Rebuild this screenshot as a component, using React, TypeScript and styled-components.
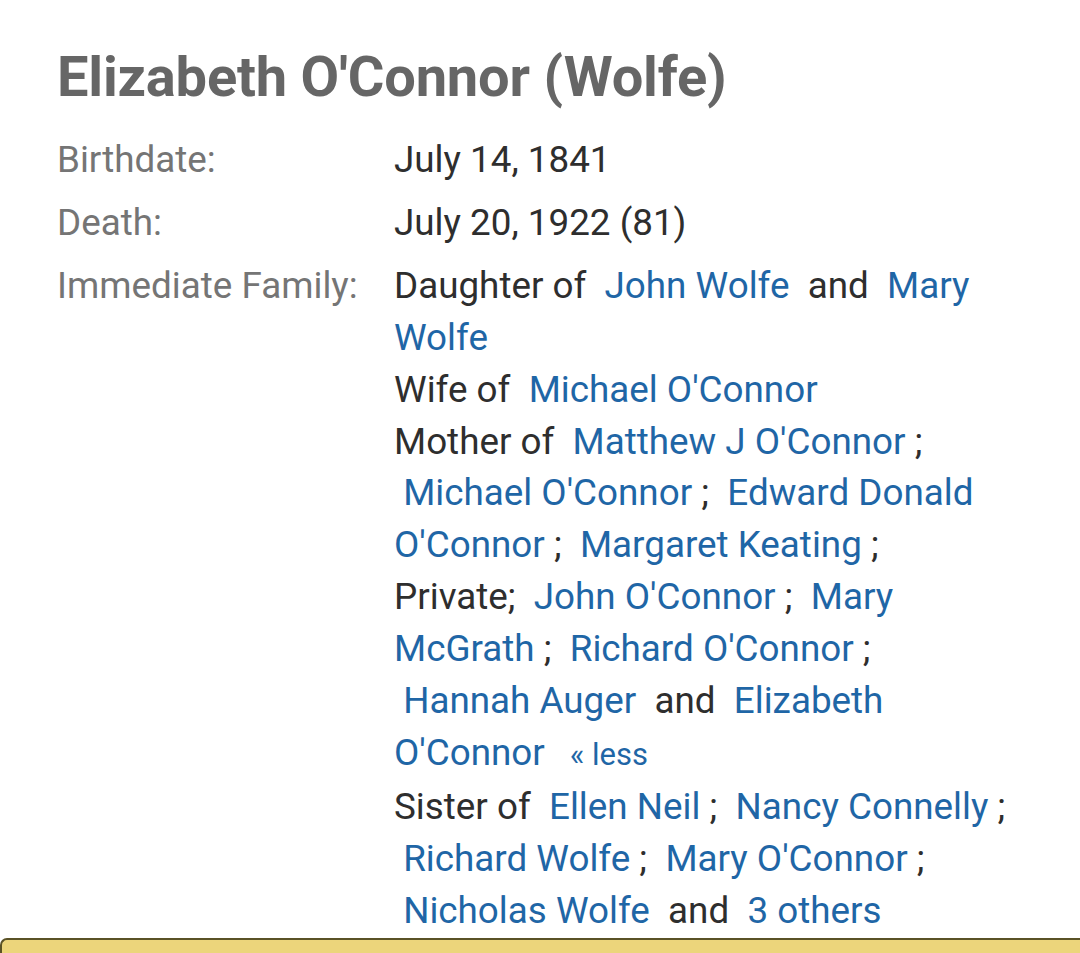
import * as React from "react";
import styled, { createGlobalStyle } from "styled-components";

const GlobalStyle = createGlobalStyle`
  html, body {
    margin: 0;
    padding: 0;
    background: #fff;
  }
  body {
    font-family: Roboto, "Noto Sans", sans-serif;
    overflow: hidden;
  }
`;

const Page = styled.div`
  width: 1080px;
  height: 953px;
  overflow: hidden;
  display: flex;
  flex-direction: column;
`;

const Profile = styled.section`
  padding: 44px 40px 0 57px;
`;

const Name = styled.h1`
  margin: 0 0 23px;
  font-size: 56px;
  line-height: 67px;
  font-weight: 700;
  color: #666;
  letter-spacing: -0.2px;
`;

const Facts = styled.dl`
  margin: 0;
  display: grid;
  grid-template-columns: 337px 1fr;
  row-gap: 11px;
  font-size: 36.8px;
  line-height: 51.9px;
`;

const Label = styled.dt`
  margin: 0;
  color: #757575;
  white-space: nowrap;
`;

const Value = styled.dd`
  margin: 0;
  color: #2e2e2e;
`;

// one visual line of the family list, spaces kept as written
const Line = styled.div`
  white-space: pre;
`;

const Person = styled.a`
  color: #1f66a6;
  text-decoration: none;
`;

const Toggle = styled.a`
  color: #1f66a6;
  font-size: 31px;
  margin-left: 25px;
  text-decoration: none;
`;

const Notice = styled.div`
  margin-top: 1px;
  flex: 1;
  background: #ecd57b;
  border-top: 2px solid #5a5226;
  border-left: 2px solid #5a5226;
  border-top-left-radius: 7px;
`;

const P = ({ n }: { n: string }) => <Person href="#">{n}</Person>;

export default function App() {
  return (
    <Page>
      <GlobalStyle />
      <Profile>
        <Name>Elizabeth O'Connor (Wolfe)</Name>
        <Facts>
          <Label>Birthdate:</Label>
          <Value>July 14, 1841</Value>
          <Label>Death:</Label>
          <Value>July 20, 1922 (81)</Value>
          <Label>Immediate Family:</Label>
          <Value>
            <Line>
              {"Daughter of  "}
              <P n="John Wolfe" />
              {"  and  "}
              <P n="Mary" />
            </Line>
            <Line>
              <P n="Wolfe" />
            </Line>
            <Line>
              {"Wife of  "}
              <P n="Michael O'Connor" />
            </Line>
            <Line>
              {"Mother of  "}
              <P n="Matthew J O'Connor" />
              {" ;"}
            </Line>
            <Line>
              {" "}
              <P n="Michael O'Connor" />
              {" ;  "}
              <P n="Edward Donald" />
            </Line>
            <Line>
              <P n="O'Connor" />
              {" ;  "}
              <P n="Margaret Keating" />
              {" ;"}
            </Line>
            <Line>
              {"Private;  "}
              <P n="John O'Connor" />
              {" ;  "}
              <P n="Mary" />
            </Line>
            <Line>
              <P n="McGrath" />
              {" ;  "}
              <P n="Richard O'Connor" />
              {" ;"}
            </Line>
            <Line>
              {" "}
              <P n="Hannah Auger" />
              {"  and  "}
              <P n="Elizabeth" />
            </Line>
            <Line>
              <P n="O'Connor" />
              <Toggle href="#">« less</Toggle>
            </Line>
            <Line>
              {"Sister of  "}
              <P n="Ellen Neil" />
              {" ;  "}
              <P n="Nancy Connelly" />
              {" ;"}
            </Line>
            <Line>
              {" "}
              <P n="Richard Wolfe" />
              {" ;  "}
              <P n="Mary O'Connor" />
              {" ;"}
            </Line>
            <Line>
              {" "}
              <P n="Nicholas Wolfe" />
              {"  and  "}
              <P n="3 others" />
            </Line>
          </Value>
        </Facts>
      </Profile>
      <Notice />
    </Page>
  );
}
